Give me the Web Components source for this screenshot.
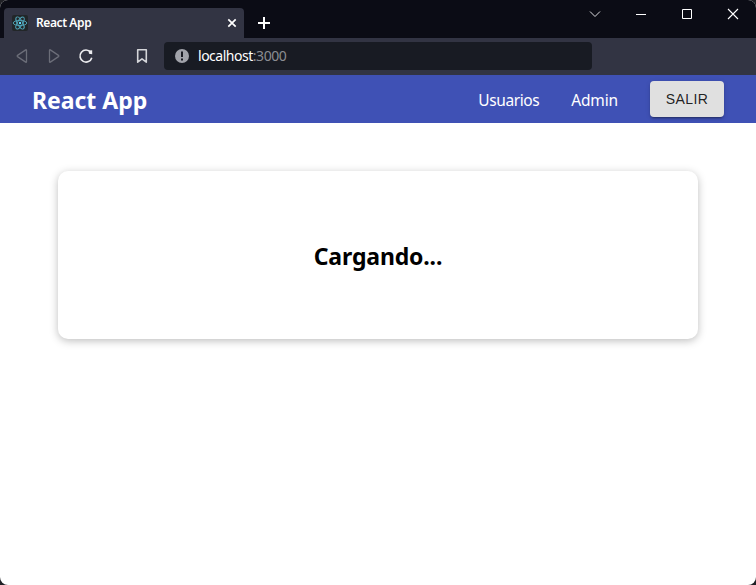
<!DOCTYPE html>
<html lang="es">
<head>
<meta charset="utf-8">
<title>React App</title>
<style>
html{background:#202126}
body{margin:0;width:756px;height:585px;overflow:hidden;font-family:"Noto Sans","Open Sans",sans-serif}
</style>
</head>
<body>
<browser-window>
  <tab-strip slot="chrome">React App</tab-strip>
  <address-bar slot="chrome">localhost<span slot="port">:3000</span></address-bar>
  <app-navbar>React App
    <nav-item slot="links" style="--spacing:-.42px">Usuarios</nav-item>
    <nav-item slot="links" style="--spacing:-.15px">Admin</nav-item>
    <contained-button slot="links">SALIR</contained-button>
  </app-navbar>
  <loading-card>Cargando...</loading-card>
</browser-window>
<script>
const define = (name, html) => customElements.define(name, class extends HTMLElement {
  constructor() {
    super();
    this.attachShadow({ mode: 'open' }).innerHTML = html;
  }
});

define('browser-window', `<style>
:host{display:flex;flex-direction:column;width:756px;height:585px;box-sizing:border-box;border-radius:8px;overflow:hidden;background:#fff}
</style><slot name="chrome"></slot><slot></slot>`);

define('tab-strip', `<style>
:host{display:flex;height:38px;background:#0b0c15;align-items:flex-start;color:#fff}
.tab{display:flex;align-items:center;box-sizing:border-box;width:240px;height:30px;margin:8px 0 0 4px;padding:0 7px 0 8px;border-radius:4px 4px 0 0;background:#323443;font-size:12px;font-weight:600}
.label{flex:1;margin-left:8px;letter-spacing:-.4px;line-height:16px;white-space:nowrap}
svg{display:block;flex:none}
.plus{margin:17px 0 0 14px}
.controls{display:flex;margin-left:auto;padding-right:15px;gap:30px;height:28px;align-items:center}
</style>
<div class="tab">
<svg width="16" height="16" viewBox="0 0 16 16"><rect width="16" height="16" rx="2" fill="#222628"/><g fill="none" stroke="#50a5b9" stroke-width=".95"><ellipse cx="8" cy="8" rx="6.8" ry="2.6"/><ellipse cx="8" cy="8" rx="6.8" ry="2.6" transform="rotate(60 8 8)"/><ellipse cx="8" cy="8" rx="6.8" ry="2.6" transform="rotate(120 8 8)"/></g><circle cx="8" cy="8" r="1.2" fill="#61dafb"/></svg>
<span class="label"><slot></slot></span>
<svg width="10" height="10" viewBox="0 0 10 10"><path d="M1.3 1.3l7.4 7.4M8.7 1.3L1.3 8.7" stroke="#fff" stroke-width="1.7"/></svg>
</div>
<svg class="plus" width="12" height="12" viewBox="0 0 12 12"><path d="M6 0v12M0 6h12" stroke="#fff" stroke-width="2"/></svg>
<div class="controls">
<svg width="16" height="16" viewBox="0 0 16 16"><path d="M3 5.500l5 5 5-5" fill="none" stroke="#dcdce0"/></svg>
<svg width="16" height="16" viewBox="0 0 16 16"><path d="M3 8.500h10" stroke="#fff"/></svg>
<svg width="16" height="16" viewBox="0 0 16 16"><path d="M3.500 3.500h9v9h-9z" fill="none" stroke="#fff"/></svg>
<svg width="16" height="16" viewBox="0 0 16 16"><path d="M3 3l10 10M13 3L3 13" stroke="#fff" stroke-width="1.1"/></svg>
</div>`);

define('address-bar', `<style>
:host{display:flex;align-items:center;height:37px;box-sizing:border-box;padding:0 0 1px 14px;background:#323443;color:#fff}
svg{display:block;flex:none}
.nav{display:flex;gap:16px}
.mark{margin-left:40px}
.field{display:flex;align-items:center;box-sizing:border-box;width:428px;height:28px;margin-left:14px;padding-left:10px;border-radius:4px;background:#181b23;font-size:14px}
.url{margin-left:8px;letter-spacing:-.48px;white-space:nowrap;line-height:20px}
.port{color:#8b8d92}
</style>
<div class="nav">
<svg width="16" height="16" viewBox="0 0 16 16"><path d="M12.500 2.300q0-.9-.8-.4L3.500 7.400q-.8.600 0 1.200l8.200 5.500q.8.500.8-.4z" fill="none" stroke="#6b6d78" stroke-width="1.300" stroke-linejoin="round"/></svg>
<svg width="16" height="16" viewBox="0 0 16 16"><path d="M3.500 2.300q0-.9.8-.4l8.200 5.500q.8.600 0 1.200l-8.200 5.500q-.8.500-.8-.4z" fill="none" stroke="#6b6d78" stroke-width="1.300" stroke-linejoin="round"/></svg>
<svg width="16" height="16" viewBox="0 0 16 16"><path d="M12.700 4.300A6 6 0 1 0 13.800 9.700" fill="none" stroke="#ececef" stroke-width="1.6"/><path d="M10.500 2.500l3.700-.3v4.100L11 5.800z" fill="#ececef"/></svg>
</div>
<svg class="mark" width="16" height="16" viewBox="0 0 16 16"><path d="M3.700 1.700h8.600v12.500L8 10.900l-4.300 3.300z" fill="none" stroke="#d4d5d9" stroke-width="1.600" stroke-linejoin="round"/></svg>
<div class="field">
<svg width="16" height="16" viewBox="0 0 16 16"><circle cx="8" cy="8" r="7" fill="#a1a3aa"/><path d="M8 3.500v5.500M8 10.500v2" stroke="#181b23" stroke-width="2"/></svg>
<span class="url"><slot></slot><span class="port"><slot name="port"></slot></span></span>
</div>`);

define('app-navbar', `<style>
:host{display:flex;align-items:center;justify-content:space-between;height:48px;box-sizing:border-box;padding:0 32px;background:#3f51b5;color:#fff}
h1{margin:0;font-size:23px;line-height:32px;font-weight:700;letter-spacing:-.03px;white-space:nowrap;padding-top:2px}
nav{display:flex;align-items:center;gap:32px}
</style><h1><slot></slot></h1><nav><slot name="links"></slot></nav>`);

define('nav-item', `<style>
:host{display:block;font-size:15.500px;line-height:22px;padding-top:2px;letter-spacing:var(--spacing)}
</style><slot></slot>`);

define('contained-button', `<style>
:host{display:block}
button{display:block;width:74px;height:36px;padding:0;border:0;border-radius:4px;background:#e0e0e0;color:rgba(0,0,0,.87);font:400 14px/24px "Liberation Sans",Arial,sans-serif;letter-spacing:.4px;box-shadow:0 3px 1px -2px rgba(0,0,0,.2),0 2px 2px rgba(0,0,0,.14),0 1px 5px rgba(0,0,0,.12)}
</style><button><slot></slot></button>`);

define('loading-card', `<style>
:host{display:flex;align-items:center;justify-content:center;box-sizing:border-box;width:640px;height:168px;margin:48px auto 0;padding-top:2px;border-radius:10px;background:#fff;color:#000;box-shadow:0 2px 8px rgba(0,0,0,.26)}
h2{margin:0;font-size:23px;line-height:32px;font-weight:700;letter-spacing:-.15px}
</style><h2><slot></slot></h2>`);
</script>
</body>
</html>
